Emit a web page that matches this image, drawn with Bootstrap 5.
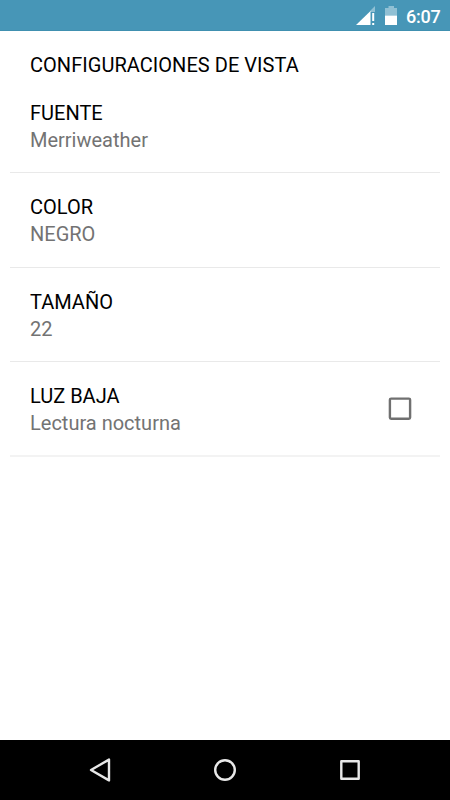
<!DOCTYPE html>
<html lang="es"><head><meta charset="utf-8"><meta name="viewport" content="width=device-width, initial-scale=1"><title>Configuraciones de vista</title>
<link href="https://cdn.jsdelivr.net/npm/bootstrap@5.3.0/dist/css/bootstrap.min.css" rel="stylesheet">
<style>
body{font-family:Roboto,sans-serif;color:#000;height:800px;overflow:hidden}
.status-bar{height:31px;background:#4796b7;color:#fff;font-size:18px;font-weight:500;line-height:31px;padding-right:10px;border-bottom:1px solid #4090b0}
.clock{width:34px;margin-left:9px;letter-spacing:-.2px;padding-top:2px}
.battery{margin-left:9px}
.view-title{font-size:20px;line-height:24px;margin:22px 30px 0;letter-spacing:.04px}
.pref-list{margin:0 10px}
.pref{height:94px;border-bottom:1px solid #e9e9e9;padding:22px 20px 0}
.pref-first{height:96px;padding-top:24px}
.pref-color{height:95px}
.pref-last{height:95px;border-bottom:2px solid #f3f3f3}
.pref-name,.pref-value{font-size:20px;line-height:24px}
.pref-value{margin-top:3px;color:#737373}
.checkbox-icon{margin:2px 7px 0 0}
.nav-keys{height:60px}
</style></head>
<body class="d-flex flex-column bg-white">
<header class="status-bar d-flex justify-content-end align-items-center flex-shrink-0">
<svg width="20" height="19" viewBox="0 0 20 19" fill="#fff"><path d="M14 5L19 0V6H14Z" opacity=".4"/><path d="M0 19L14.5 5V19Z"/><path d="M16.2 7h2v8h-2zM16.2 17h2v2h-2z"/></svg>
<svg class="battery" width="12" height="19" viewBox="0 0 12 19" fill="#fff"><path d="M0 9.5V2H3.5V0H9V2H12V9.5Z" opacity=".4"/><path d="M0 9.5H12V19H0Z"/></svg>
<span class="clock">6:07</span></header>
<main class="flex-grow-1">
<h1 class="view-title fw-normal mb-0">CONFIGURACIONES DE VISTA</h1>
<div class="pref-list">
<div class="pref pref-first"><div class="pref-name">FUENTE</div><div class="pref-value">Merriweather</div></div>
<div class="pref pref-color"><div class="pref-name">COLOR</div><div class="pref-value">NEGRO</div></div>
<div class="pref"><div class="pref-name">TAMAÑO</div><div class="pref-value">22</div></div>
<div class="pref pref-last d-flex justify-content-between"><div><div class="pref-name">LUZ BAJA</div><div class="pref-value">Lectura nocturna</div></div>
<svg class="checkbox-icon" role="img" aria-label="Luz baja" width="26" height="46" viewBox="0 0 26 46"><rect x="2.9" y="12.6" width="20.2" height="20.2" rx="1.2" fill="none" stroke="#707070" stroke-width="2.4"/></svg></div>
</div></main>
<footer class="nav-keys bg-black flex-shrink-0 d-flex justify-content-center align-items-center">
<svg width="300" height="60" viewBox="0 0 300 60" fill="none" stroke="#e8e8e8" stroke-width="2.4" stroke-linejoin="round"><path d="M16 30L34 19.6V40.4Z"/><circle cx="150" cy="30" r="9.8"/><rect x="266.3" y="21.3" width="17.4" height="17.4"/></svg>
</footer>
<script src="https://cdn.jsdelivr.net/npm/bootstrap@5.3.0/dist/js/bootstrap.bundle.min.js"></script>
</body></html>
